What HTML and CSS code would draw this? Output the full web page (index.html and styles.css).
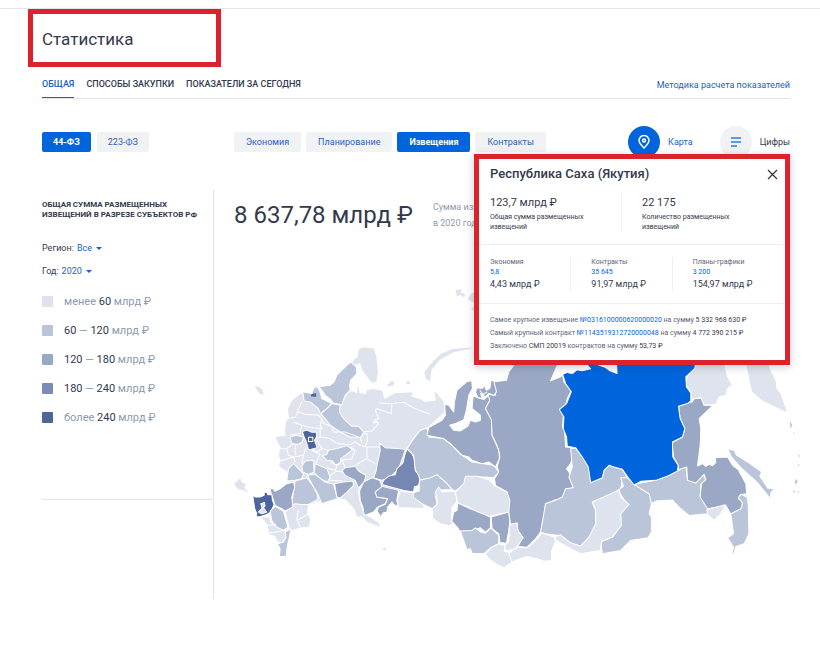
FILE: index.html
```html
<!DOCTYPE html>
<html lang="ru">
<head>
    <meta charset="UTF-8">
    <meta name="viewport" content="width=device-width, initial-scale=1.0">
    <title>Статистика</title>
    <link rel="stylesheet" href="styles.css">
</head>
<body>

<div class="page">
    <div class="title-box">
        <h1>Статистика</h1>
    </div>

    <div class="container">
        <nav class="tabs">
            <a href="#" class="tab active">ОБЩАЯ</a>
            <a href="#" class="tab">СПОСОБЫ ЗАКУПКИ</a>
            <a href="#" class="tab">ПОКАЗАТЕЛИ ЗА СЕГОДНЯ</a>
            <a href="#" class="method">Методика расчета показателей</a>
        </nav>

        <div class="filters">
            <div class="laws">
                <button class="chip active">44-ФЗ</button>
                <button class="chip">223-ФЗ</button>
            </div>
            <div class="stages">
                <button class="chip">Экономия</button>
                <button class="chip">Планирование</button>
                <button class="chip active">Извещения</button>
                <button class="chip">Контракты</button>
            </div>
            <div class="views">
                <button class="view active">
                    <span class="circle">
                        <svg width="12" height="14" viewBox="0 0 12 14" fill="none" stroke="#fff" stroke-width="1.5">
                            <path d="M6 13C3 10 1 8 1 5.5a5 5 0 0 1 10 0C11 8 9 10 6 13z"/>
                            <circle cx="6" cy="5.5" r="1.5"/>
                        </svg>
                    </span>
                    Карта
                </button>
                <button class="view">
                    <span class="circle">
                        <svg width="12" height="10" viewBox="0 0 12 10" fill="none" stroke="#2b7de0" stroke-width="1.5">
                            <path d="M1 1h10M1 5h10M1 9h6"/>
                        </svg>
                    </span>
                    Цифры
                </button>
            </div>
        </div>

        <div class="content">
            <aside class="sidebar">
                <div class="sidebar-inner">
                    <h2>ОБЩАЯ СУММА РАЗМЕЩЕННЫХ ИЗВЕЩЕНИЙ В РАЗРЕЗЕ СУБЪЕКТОВ РФ</h2>
                    <div class="field">
                        <label for="region">Регион:</label>
                        <select id="region"><option>Все</option></select>
                        <span class="caret"></span>
                    </div>
                    <div class="field">
                        <label for="year">Год:</label>
                        <select id="year"><option>2020</option></select>
                        <span class="caret"></span>
                    </div>
                    <ul class="legend">
                        <li><i class="swatch s1"></i><span>менее <b>60</b> млрд ₽</span></li>
                        <li><i class="swatch s2"></i><span><b>60</b> — <b>120</b> млрд ₽</span></li>
                        <li><i class="swatch s3"></i><span><b>120</b> — <b>180</b> млрд ₽</span></li>
                        <li><i class="swatch s4"></i><span><b>180</b> — <b>240</b> млрд ₽</span></li>
                        <li><i class="swatch s5"></i><span>более <b>240</b> млрд ₽</span></li>
                    </ul>
                </div>
            </aside>

            <main class="main">
                <div class="total">
                    <strong>8 637,78 млрд ₽</strong>
                    <p>Сумма извещений<br>в 2020 году</p>
                </div>

                <svg class="map" viewBox="12 -180 1665 900">
                    <!-- Европейская часть -->
                    <g>
                        <path class="c1" d="M205 163L215 158L245 165L300 190L335 190L350 160L365 150L380 158L379 137L385 140L390 158L405 160L410 148L430 145L458 150L463 175L480 165L492 158L550 155L545 168L570 175L585 184L615 180L612 160L604 152L618 156L640 182L645 215L595 260L565 275L545 300L530 335L510 460L400 440L385 455L390 485L402 522L420 530L445 545L452 560L435 556L410 545L395 530L380 530L370 505L345 478L320 475L262 485L235 495L232 520L242 535L238 560L210 563L195 568L180 572L165 515L185 500L190 430L170 420L170 395L155 385L145 375L150 360L144 345L150 320L145 312L135 295L140 288L165 285L163 270L166 245L175 232L172 205L185 180z"/>
                        <path class="c1" d="M385 25L400 20L432 24L440 50L445 95L440 125L425 130L412 115L395 90L388 70L375 78L362 70L370 58L380 50z"/>
                        <path class="c2" d="M362 65L378 80L380 100L362 120L358 135L360 150L345 165L335 193L310 190L302 178L285 165L275 150L265 140L300 135L312 125L320 105L345 80z"/>
                        <path class="c2" d="M218 155L245 160L250 145L260 138L268 150L275 175L305 190L290 205L270 220L265 205L240 185L222 182z"/>
                        <path class="c5 thin" d="M242 164L250 160L258 159L258 170L243 169z"/>
                        <path class="c2" d="M272 220L290 205L305 190L330 195L328 215L338 232L350 245L365 258L385 258L400 275L392 292L360 290L330 275L300 255L285 235z"/>
                        <path class="c2" d="M180 290L200 285L220 290L217 305L205 312L185 310z"/>
                        <path class="c2" d="M276 346L290 342L295 330L320 325L350 316L367 328L345 345L332 355L330 370L315 374L308 362L290 360z"/>
                        <path class="c2" d="M175 385L190 370L205 385L220 400L215 415L195 420L170 422z"/>
                        <path class="c2" d="M215 378L225 362L250 360L252 395L235 402L218 395z"/>
                        <path class="c2" d="M255 370L290 385L300 410L292 425L270 415L252 398z"/>
                        <path class="c2" d="M232 405L255 402L285 425L310 432L322 475L300 482L275 490L262 460L245 430z"/>
                        <path class="c2" d="M195 422L230 412L245 432L262 462L262 478L235 492L215 492L195 490L180 498L188 470L192 440z"/>
                        <path class="c3" d="M119 445L130 445L134 453L150 445L170 430L190 425L194 440L185 470L188 500L165 512L155 505L135 495L127 470z"/>
                        <path class="c5" d="M68 465L76 470L90 470L102 465L103 455L112 457L113 463L125 462L127 480L132 492L122 515L110 522L88 530L78 528L80 520L74 505z"/>
                        <path class="c1" d="M92 490L103 486L105 497L100 502L110 515L95 520L85 515L96 504z"/>
                        <path class="c2" d="M120 512L135 498L160 512L165 530L173 560L160 570L140 560L125 540z"/>
                        <path class="c1" d="M90 528L118 530L122 545L140 560L165 572L167 592L155 608L140 602L135 588L115 582L112 555z"/>
                        <path class="c2" d="M165 575L182 565L178 590L172 615L168 648L148 648L150 625L142 610L160 605L168 590z"/>
                        <path class="c3" d="M313 430L340 425L368 422L370 435L350 455L330 473L320 470z"/>
                        <path class="c3" d="M335 392L345 382L375 378L385 392L407 405L402 425L385 443L375 420L345 405z"/>
                        <path class="c3" d="M448 308L465 322L510 325L525 328L518 350L505 385L480 410L455 420L430 413L438 390L440 375L450 330z"/>
                        <path class="c3" d="M388 452L400 425L425 412L448 420L456 440L435 455L440 470L472 475L465 490L442 500L430 515L402 525L398 500L390 480z"/>
                        <path class="c3" d="M455 438L505 450L500 478L503 498L490 492L485 485L472 500L470 515L458 518L452 530L440 512L445 500L465 492L472 475L440 470L435 455z"/>
                        <path class="c4" d="M530 326L545 340L553 358L555 390L570 408L565 435L552 440L550 455L520 450L490 442L455 432L460 420L475 407L495 403L500 385L518 368L523 345z"/>
                        <path class="c1" d="M510 453L550 458L570 470L583 505L530 502L505 503L500 480z"/>
                        <path class="c1 thin" d="M74 137L90 142L98 150L100 162L92 163L83 153zM12 432L30 414L36 426L48 432L43 442L55 456L40 450L25 447zM472 133L485 122L493 128L488 137L472 138zM525 127L535 122L541 128L533 134zM457 625L463 620L469 626L462 630z"/>
                        <path class="borders" d="M200 218L215 185M175 235L195 232L205 215L225 222L265 225L275 235L270 255L275 265L240 262L215 255L190 245M215 255L210 280L180 285M275 235L280 250L305 258L310 275L345 275L390 292L395 310M270 265L270 290L255 295M270 290L300 295L320 310L360 313L375 305L390 315L410 320L447 320M390 292L400 280L410 280L412 300L405 320M400 275L425 272L445 250L440 243L430 250L432 240L445 235L435 210L440 205L468 215L483 220L485 190L520 186L555 206L600 222M445 188L470 190L483 190M260 300L275 325L295 330M275 325L262 335L245 327M145 325L170 325L190 310M170 325L175 345L190 350L195 365M150 362L190 350L220 345L228 320M195 315L195 345M220 345L215 370M245 330L270 342L255 370M300 365L320 375L315 390L290 382M320 375L335 360L365 355L375 330L362 320M335 360L345 382M375 378L390 365L410 355L435 370M410 320L410 355M300 405L320 392L340 395M300 420L335 422M385 443L385 455M205 510L200 535L210 560M205 538L235 520M112 555L138 552M115 578L140 575L160 570"/>
                        <path class="c5" d="M217 274L230 269L245 276L259 275L259 290L253 300L261 322L235 329L229 305L222 290z"/>
                        <path class="borders" d="M235 291h13v13h-13z"/>
                    </g>

                    <!-- Урал и Сибирь -->
                    <g transform="translate(450 0)">
                        <path class="c1" d="M130 95L150 70L180 40L215 25L275 20L270 28L220 38L180 60L155 90L150 128L135 115z"/>
                        <path class="c2" d="M80 325L100 295L120 270L140 263L145 290L190 295L215 315L245 345L275 365L340 375L355 395L340 412L310 410L260 410L250 432L225 452L215 447L195 425L170 405L150 415L118 420L115 405L105 390L100 345z"/>
                        <path class="c3" d="M193 192L205 195L220 215L222 185L230 150L260 124L274 122L276 145L265 165L258 210L250 238L225 250L208 255L220 270L240 272L262 258L270 240L285 245L300 240L300 225L275 205L278 165L290 172L310 178L325 165L328 180L315 205L333 235L335 285L355 330L357 355L345 380L325 365L305 370L275 360L265 350L245 345L210 310L190 295L165 290L140 285L145 262L185 240L195 225z"/>
                        <path class="c2" d="M118 420L150 412L170 403L195 425L215 447L175 450L165 465L170 490L158 506L125 490L100 472L98 457L116 452z"/>
                        <path class="c1" d="M165 455L175 440L185 455L225 452L230 485L215 500L213 540L218 550L205 557L180 550L157 535L156 505L172 490z"/>
                        <path class="c1" d="M225 455L250 430L255 408L290 408L325 418L345 438L380 455L387 470L388 515L350 522L320 530L290 518L265 500L232 490z"/>
                        <path class="c3" d="M232 488L270 505L330 530L330 562L315 575L300 562L275 570L240 574L230 560L214 542L220 515L230 510z"/>
                        <path class="c3" d="M332 530L385 515L388 545L384 575L378 608L358 606L355 580L335 565z"/>
                        <path class="c2" d="M240 572L275 570L285 562L300 575L315 578L332 563L355 585L355 610L330 622L310 640L275 638L270 625L260 628z"/>
                        <path class="c1" d="M315 640L335 620L355 610L375 615L372 632L385 635L397 650L395 665L370 682L350 672L325 655z"/>
                        <path class="c3" d="M340 125L378 120L385 95L400 75L402 60L555 60L530 85L512 120L545 100L550 125L572 152L560 175L555 195L538 207L548 225L546 262L552 270L555 320L577 322L578 345L570 370L558 385L575 410L578 440L555 455L545 475L525 478L495 490L490 530L480 575L465 595L440 620L412 618L425 590L412 570L410 548L390 552L385 515L388 480L380 455L345 435L342 415L355 395L350 380L358 350L355 330L345 305L335 285L333 240L315 205L328 180L322 162L345 165z"/>
                        <path class="c1" d="M388 553L410 548L412 570L428 592L405 625L378 632L372 618L385 600z"/>
                        <path class="c1" d="M385 638L412 620L440 622L465 600L485 577L520 590L525 602L512 635L514 660L490 662L470 655L440 648L410 658L395 665z"/>
                        <path class="c3" d="M285 155L290 143L305 145L312 137L318 150L328 145L332 120L340 122L348 155L340 165L325 160L315 170L300 160L306 175L292 172z"/>
                        <path class="borders" d="M298 150L308 163L320 155"/>
                    </g>

                    <!-- Восточная Сибирь и Дальний Восток -->
                    <g transform="translate(930 30)">
                        <path class="c2" d="M90 295L105 293L125 318L145 350L150 395L185 382L190 360L205 345L245 357L262 385L245 390L240 415L230 430L200 435L155 455L165 480L165 530L145 560L120 587L85 575L55 555L15 550L0 545L8 500L15 460L45 450L65 440L75 415L98 412L85 380L95 350z"/>
                        <path class="c2" d="M240 382L258 382L300 413L330 430L332 460L325 490L332 500L332 545L322 562L270 570L240 600L185 610L180 575L215 560L240 525L240 490L262 465L245 440L232 420L248 408z"/>
                        <path class="c1" d="M155 455L200 435L235 418L240 440L265 462L240 490L242 525L215 560L182 572L180 600L120 610L60 578L43 568L45 558L60 553L90 577L120 587L145 560L165 520L165 480z"/>
                        <path class="c2" d="M280 402L345 390L385 375L435 348L440 388L465 398L488 373L495 388L480 403L478 440L500 462L500 490L445 495L420 475L395 449L345 452L332 460L325 430L300 415z"/>
                        <path class="c3" d="M413 168L440 158L455 155L460 142L485 145L490 165L517 165L475 205L480 235L478 285L470 347L485 340L495 348L505 342L515 346L525 336L523 322L560 320L575 345L592 358L615 400L617 430L600 432L592 445L605 455L602 475L570 492L555 465L500 475L478 440L482 400L495 388L490 372L465 398L440 390L438 350L412 358L412 345L398 320L394 277L425 260L432 235L418 205z"/>
                        <path class="c1" d="M498 478L553 463L540 490L520 510L502 495z"/>
                        <path class="c2" d="M570 490L600 475L605 458L592 442L600 432L618 440L622 460L624 550L610 580L585 588L578 612L573 610L578 590L560 562L578 550z"/>
                        <path class="c1" d="M460 30L548 30L560 80L575 105L560 115L555 135L535 140L525 162L490 165L480 142L452 148L450 125L432 100z"/>
                        <path class="c1" d="M612 30L680 30L690 62L705 90L708 115L720 130L740 188L700 170L660 150L632 125L622 80z"/>
                        <path class="c2 thin" d="M563 297L580 303L585 315L625 340L660 365L655 378L680 415L697 416L688 428L687 441L650 395L600 350L572 318z"/>
                        <path class="hot" d="M66 72L85 64L95 70L110 58L135 56L145 30L465 30L462 55L435 80L437 110L450 128L450 152L440 160L413 168L418 205L432 235L425 260L395 275L396 320L412 345L410 362L385 375L345 390L300 393L280 404L265 385L245 357L220 350L205 345L190 360L185 382L150 397L143 350L125 320L105 292L80 288L78 260L68 235L70 200L56 178L78 160L92 125L75 100z"/>
                        <path class="sea" d="M30 92L50 45L140 45L150 56L125 62L105 58L92 70L72 64L60 80zM172 44L228 44L229 70L208 62L195 52z"/>
                        <path class="c2 thin" d="M746 212L754 225L749 235zM757 245L761 248L758 251zM773 312L777 318L772 320zM772 340L776 345L771 347zM765 385L770 392L765 402L761 398zM757 420L763 423L757 427zM769 423L776 425L771 428z"/>
                    </g>

                    <!-- Острова -->
                    <path class="c1 thin" d="M675 -150L690 -153L694 -145L688 -142L700 -140L705 -132L698 -128L690 -136L680 -130zM712 -122L722 -138L732 -145L734 -110L724 -115zM726 -98L734 -100L732 -88L722 -92z"/>
                </svg>
            </main>
        </div>

        <div class="popup">
            <header class="popup-head">
                <h3>Республика Саха (Якутия)</h3>
                <button class="close" aria-label="Закрыть">
                    <svg width="11" height="11" viewBox="0 0 11 11" stroke="#333a4d" stroke-width="1.3">
                        <path d="M1 1l9 9M10 1l-9 9"/>
                    </svg>
                </button>
            </header>
            <div class="row two">
                <div class="cell">
                    <p class="big">123,7 млрд ₽</p>
                    <p class="note">Общая сумма размещенных извещений</p>
                </div>
                <div class="cell">
                    <p class="big">22 175</p>
                    <p class="note">Количество размещенных извещений</p>
                </div>
            </div>
            <div class="row three">
                <div class="cell">
                    <p class="small">Экономия</p>
                    <a href="#">5,8</a>
                    <p class="sum">4,43 млрд ₽</p>
                </div>
                <div class="cell">
                    <p class="small">Контракты</p>
                    <a href="#">35 645</a>
                    <p class="sum">91,97 млрд ₽</p>
                </div>
                <div class="cell">
                    <p class="small">Планы-графики</p>
                    <a href="#">3 200</a>
                    <p class="sum">154,97 млрд ₽</p>
                </div>
            </div>
            <div class="facts">
                <p>Самое крупное извещение <a href="#">№0316100000620000020</a> на сумму <b>5 332 968 630 ₽</b></p>
                <p>Самый крупный контракт <a href="#">№1143519312720000048</a> на сумму <b>4 772 390 215 ₽</b></p>
                <p>Заключено <b>СМП 20019</b> контрактов на сумму <b>53,73 ₽</b></p>
            </div>
        </div>
    </div>
</div>

</body>
</html>
```

FILE: styles.css
```css
* {
    box-sizing: border-box;
}
body {
    font-family: Roboto, "Liberation Sans", sans-serif;
    font-size: 9px;
    color: #333a4d;
    background: #fff;
    margin: 0;
}
h1, h2, h3, p, ul {
    margin: 0;
    padding: 0;
}
a {
    color: #1a5fc4;
    text-decoration: none;
}
button, select {
    font: inherit;
    border: none;
    background: none;
    margin: 0;
    padding: 0;
    cursor: pointer;
}
.page {
    margin-top: 8px;
    border-top: 1px solid #e2e4e8;
}
.title-box {
    width: 193px;
    margin-left: 28px;
    padding: 16px 9px 14px;
    border: 5px solid #dc222c;
}
.title-box h1 {
    font-size: 17px;
    font-weight: 400;
    line-height: 18px;
}
.container {
    position: relative;
    padding: 0 30px 0 42px;
}

/* Tabs */
.tabs {
    display: flex;
    gap: 12px;
    border-bottom: 1px solid #e2e4e8;
}
.tab {
    padding: 10px 0 6px;
    font-weight: 500;
    line-height: 14px;
    color: #333a4d;
}
.tab.active {
    color: #1a5fc4;
    border-bottom: 1px solid #1a5fc4;
}
.method {
    margin-left: auto;
    padding-top: 10px;
    line-height: 16px;
}

/* Buttons over the map */
.filters {
    display: flex;
    align-items: center;
    margin-top: 27px;
}
.laws {
    display: flex;
    gap: 6px;
    width: 192px;
}
.stages {
    display: flex;
    gap: 5px;
}
.chip {
    height: 20px;
    padding: 0 12px;
    border-radius: 2px;
    background: #f1f2f3;
    color: #2f5fbb;
}
.laws .chip {
    padding: 0 11px;
}
.chip.active {
    background: #0065dd;
    color: #fff;
    font-weight: 700;
}
.views {
    display: flex;
    gap: 27px;
    margin-left: auto;
}
.view {
    display: flex;
    align-items: center;
    gap: 8px;
    color: #333a4d;
}
.view.active {
    color: #1a5fc4;
}
.circle {
    display: flex;
    align-items: center;
    justify-content: center;
    width: 32px;
    height: 32px;
    border-radius: 50%;
    background: #f1f2f3;
}
.view.active .circle {
    background: #0065dd;
}

/* Sidebar */
.content {
    display: flex;
    margin-top: 32px;
}
.sidebar {
    width: 172px;
    height: 409px;
    flex: none;
    border-right: 1px solid #e2e4e8;
}
.sidebar-inner {
    height: 310px;
    padding-top: 10px;
    border-bottom: 1px solid #e2e4e8;
}
.sidebar h2 {
    margin-bottom: 21px;
    font-size: 8px;
    font-weight: 700;
    line-height: 10px;
}
.field {
    display: flex;
    align-items: center;
    height: 14px;
    margin-bottom: 9px;
}
.field select {
    margin: 0 3px;
    appearance: none;
    color: #1a5fc4;
}
.caret {
    border: 3px solid transparent;
    border-top-color: #1a5fc4;
    border-bottom: none;
}
.legend {
    display: grid;
    gap: 15px;
    margin-top: 16px;
    list-style: none;
}
.legend li {
    display: flex;
    align-items: center;
    gap: 11px;
    height: 14px;
    font-size: 11px;
    color: #8d9ab0;
}
.legend b {
    font-weight: 400;
    color: #333a4d;
}
.swatch {
    width: 11px;
    height: 11px;
    border-radius: 1px;
}
.s1 { background: #dfe2ec; }
.s2 { background: #bbc5d9; }
.s3 { background: #9aa8c6; }
.s4 { background: #7a8cb5; }
.s5 { background: #506699; }

/* Map */
.main {
    flex: 1;
    min-width: 0;
    padding: 8px 0 0 20px;
}
.total {
    display: flex;
    align-items: center;
    gap: 20px;
    height: 34px;
}
.total strong {
    font-size: 24px;
    font-weight: 400;
    white-space: nowrap;
}
.total p {
    line-height: 16px;
    color: #8d9ab0;
    white-space: nowrap;
}
.map {
    display: block;
    width: 100%;
    margin-top: 48px;
    overflow: visible;
}
.map path {
    stroke: #fff;
    stroke-width: 3;
    stroke-linejoin: round;
}
.map .thin {
    stroke-width: 0;
}
.map .c1 { fill: #dfe3ed; }
.map .c2 { fill: #bbc5d9; }
.map .c3 { fill: #9aa8c6; }
.map .c4 { fill: #7687b4; }
.map .c5 { fill: #4d649c; }
.map .hot { fill: #0065dd; }
.map .sea { fill: #fff; }
.map .borders { fill: none; }

/* Region popup */
.popup {
    position: absolute;
    top: 87px;
    right: 30px;
    width: 316px;
    overflow: hidden;
    border: 5px solid #dc222c;
    background: #fff;
    box-shadow: 0 2px 8px rgba(40, 50, 80, 0.25);
}
.popup-head {
    display: flex;
    align-items: center;
    justify-content: space-between;
    padding: 7px 5px 0 11px;
}
.popup h3 {
    font-size: 13px;
    font-weight: 500;
    line-height: 16px;
}
.close {
    display: flex;
    padding: 2px;
}
.row {
    display: grid;
    margin-left: -10px;
    padding: 12px 12px 12px 0;
    border-bottom: 1px solid #eceef1;
}
.two {
    grid-template-columns: 1fr 1fr;
}
.three {
    grid-template-columns: 1fr 1fr 1fr;
}
.cell {
    padding-left: 21px;
}
.cell + .cell {
    border-left: 1px solid #eceef1;
    padding-left: 20px;
}
.two .cell {
    padding-right: 30px;
}
.big {
    font-size: 11px;
    line-height: 18px;
}
.note {
    font-size: 7px;
    line-height: 10px;
}
.small, .three a {
    display: block;
    font-size: 7px;
    line-height: 10px;
    color: #5d6579;
}
.three a, .facts a {
    color: #0065dd;
}
.sum {
    line-height: 14px;
}
.facts {
    padding: 10px 11px 7px;
    font-size: 7px;
    line-height: 13px;
    color: #5d6579;
}
.facts b {
    font-weight: 400;
    color: #333a4d;
}
```
